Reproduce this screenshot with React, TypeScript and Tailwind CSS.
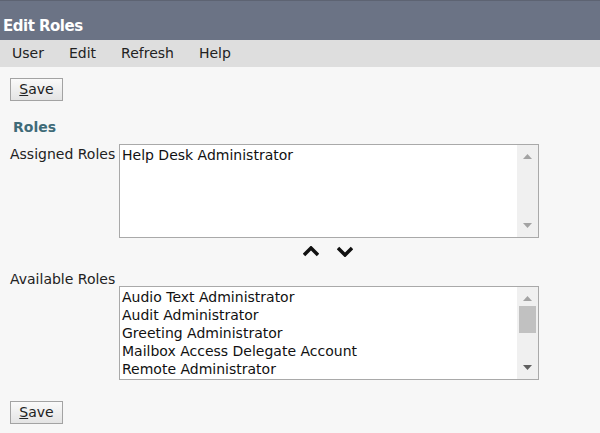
import React from "react";

const assigned = ["Help Desk Administrator"];
const available = [
  "Audio Text Administrator",
  "Audit Administrator",
  "Greeting Administrator",
  "Mailbox Access Delegate Account",
  "Remote Administrator",
];

function SaveButton() {
  return (
    <button className="h-[23px] w-[53px] border border-[#a3a3a3] bg-gradient-to-b from-[#fafafa] to-[#e4e4e4] text-[14px] text-[#222] leading-none">
      <span className="underline">S</span>ave
    </button>
  );
}

function Tri({ up, color }: { up?: boolean; color: string }) {
  return (
    <svg width="9" height="5" viewBox="0 0 9 5">
      <path d={up ? "M0 5 L4.5 0 L9 5 Z" : "M0 0 L4.5 5 L9 0 Z"} fill={color} />
    </svg>
  );
}

function ListBox({ items, thumb }: { items: string[]; thumb?: boolean }) {
  return (
    <div className="flex h-[94px] w-[420px] border border-[#a9a9a9] bg-white">
      <div className="flex-1 pl-[2px] pt-[1px] text-[14px] leading-[18px] text-[#111]">
        {items.map((it) => (
          <div key={it}>{it}</div>
        ))}
      </div>
      <div className="flex w-[21px] flex-col items-center bg-[#f0f0f0] py-[9px]">
        <Tri up color="#a3a3a3" />
        <div className="flex w-full flex-1 flex-col px-[2px] pt-[5px]">
          {thumb && <div className="h-[27px] w-full bg-[#c1c1c1]" />}
        </div>
        <Tri color={thumb ? "#606060" : "#a3a3a3"} />
      </div>
    </div>
  );
}

export default function App() {
  return (
    <div className="h-[433px] w-[600px] bg-[#f7f7f7] font-['DejaVu_Sans',Verdana,sans-serif] text-[#222]">
      <div className="h-[40px] border-t border-[#5d6372] bg-[#6b7385] px-[3px] pt-[16px] text-[15px] font-bold leading-[18px] tracking-[-0.5px] text-white">
        Edit Roles
      </div>
      <div className="flex h-[27px] items-center gap-[25px] bg-[#dedede] px-[12px] text-[14px] text-[#222]">
        <span>User</span>
        <span>Edit</span>
        <span>Refresh</span>
        <span>Help</span>
      </div>
      <div className="px-[10px] pt-[10px]">
        <SaveButton />
        <div className="mt-[17px] pl-[3px] text-[14px] font-bold leading-[18px] text-[#3f6b78]">Roles</div>
        <div className="mt-[8px] flex">
          <div className="w-[109px] pt-[1px] text-[14px] leading-[18px]">Assigned Roles</div>
          <ListBox items={assigned} />
        </div>
        <div className="flex w-[529px] justify-center gap-[18px] pt-[8px] pl-[107px]">
          <svg width="16" height="11" viewBox="0 0 16 11">
            <path d="M1 9 L8 2 L15 9" fill="none" stroke="#111" strokeWidth="3.5" />
          </svg>
          <svg width="16" height="11" viewBox="0 0 16 11">
            <path d="M1 2 L8 9 L15 2" fill="none" stroke="#111" strokeWidth="3.5" />
          </svg>
        </div>
        <div className="mt-[15px] text-[14px] leading-[14px]">Available Roles</div>
        <div className="flex">
          <div className="w-[109px]" />
          <ListBox items={available} thumb />
        </div>
        <div className="mt-[20px]">
          <SaveButton />
        </div>
      </div>
    </div>
  );
}
